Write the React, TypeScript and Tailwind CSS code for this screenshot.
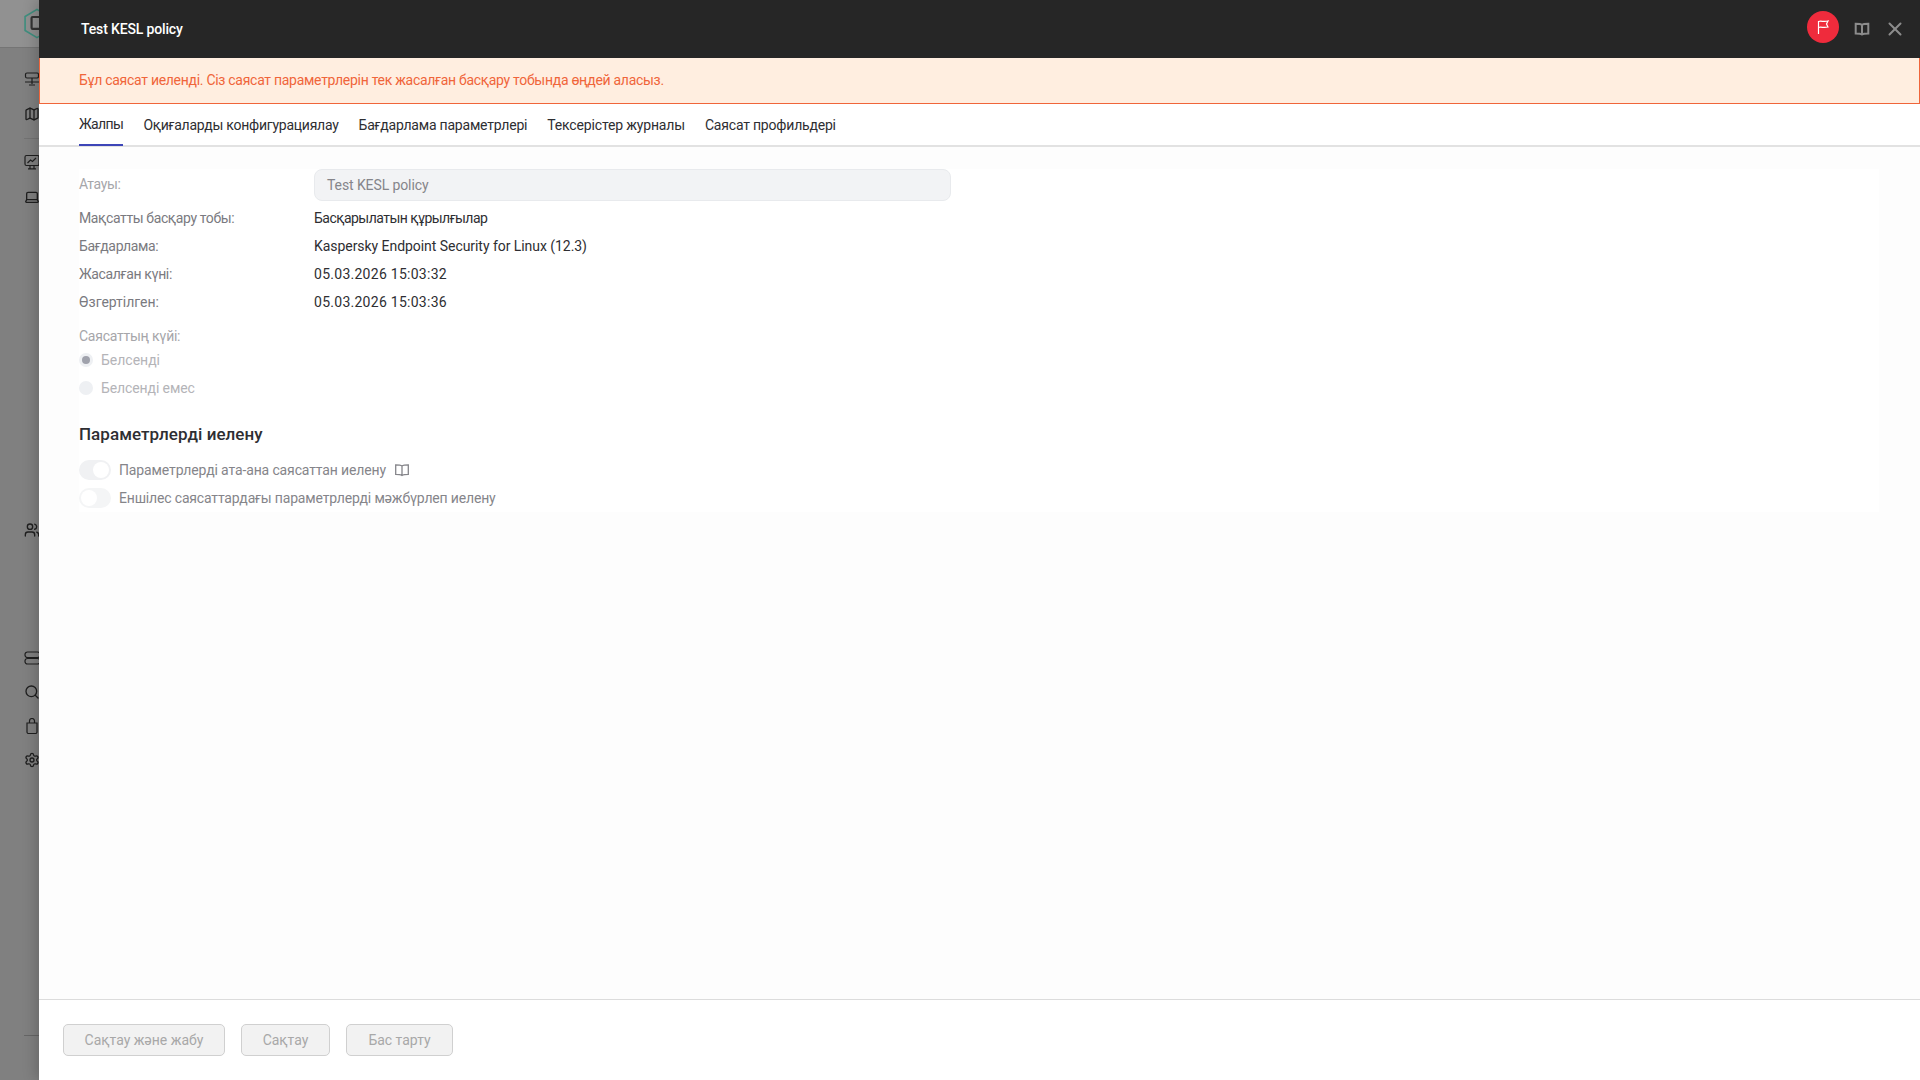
import React from 'react';
import { Laptop, Map, Search, Settings, Users, X } from 'lucide-react';

const BookIcon: React.FC<{ className?: string; width?: number }> = ({ className, width = 1.3 }) => (
  <svg viewBox="0 0 16 16" fill="none" stroke="currentColor" strokeWidth={width} className={className}>
    <path d="M8 4c-1.2-1-3-1.2-6.300-1.200v9.600c3.300 0 5.100.2 6.300 1.100 1.200-.9 3-1.100 6.300-1.100V2.800C11 2.800 9.200 3 8 4zM8 4v9.500" />
  </svg>
);

const FlagIcon = () => (
  <svg viewBox="0 0 16 16" fill="none" stroke="white" strokeWidth="1.2" className="w-4 h-4">
    <path d="M3.500 15V2.500c3-1 5 .8 9.500-.5l-1.500 3 1.500 3c-4.500 1.300-6.500-.5-9.500.5" />
  </svg>
);

const NetIcon = () => (
  <svg viewBox="0 0 16 16" fill="none" stroke="currentColor" strokeWidth="1.2" className="w-4 h-4 shrink-0">
    <rect x="1.500" y="2" width="13" height="5" rx="1.500" />
    <path d="M8 7v6M1 11h14M5 14h6" />
  </svg>
);

const MonitorIcon = () => (
  <svg viewBox="0 0 16 16" fill="none" stroke="currentColor" strokeWidth="1.2" className="w-4 h-4 shrink-0 mt-[15px]">
    <rect x="1" y="1.500" width="14" height="10" rx="1.500" />
    <path d="M3.500 9l3-3 2 1.500L12 4M6 11.500V15M10 11.500V15M4 14.800h8" />
  </svg>
);

const StackIcon = () => (
  <svg viewBox="0 0 16 16" fill="none" stroke="currentColor" strokeWidth="1.2" className="w-4 h-4 shrink-0 mt-[112px]">
    <rect x="1" y="2" width="15" height="5.500" rx="2.500" />
    <rect x="1" y="8.500" width="15" height="5.500" rx="2.500" />
  </svg>
);

const BagIcon = () => (
  <svg viewBox="0 0 16 16" fill="none" stroke="currentColor" strokeWidth="1.2" className="w-4 h-4 shrink-0 mt-[18px]">
    <path d="M3 5h10v9a1.500 1.500 0 0 1-1.500 1.500h-7A1.500 1.500 0 0 1 3 14zM5.500 5V3a2.500 2.500 0 0 1 5 0v2" />
  </svg>
);

const Row: React.FC<{ label: string; value: string; labelClass: string; valueClass: string }> = ({ label, value, labelClass, valueClass }) => (
  <div className="flex h-7 items-center">
    <div className={`w-[235px] shrink-0 text-[#7a7a80] ${labelClass}`}>{label}</div>
    <div className={`text-[#2e2e32] ${valueClass}`}>{value}</div>
  </div>
);

const Toggle: React.FC<{ on?: boolean; label: string; book?: boolean; textClass: string }> = ({ on, label, book, textClass }) => (
  <div className="flex h-7 items-center">
    <div className={`flex h-5 w-8 items-center rounded-full px-0.5 ${on ? 'justify-end bg-[#f0f1f3]' : 'justify-start bg-[#f4f5f6]'}`}>
      <div className="h-4 w-4 rounded-full bg-white" />
    </div>
    <span className={`ml-2 text-[#85858a] ${textClass}`}>{label}</span>
    {book && <BookIcon className="ml-2 w-4 h-4 text-[#85858a]" />}
  </div>
);

const FooterButton: React.FC<{ label: string; width: string }> = ({ label, width }) => (
  <button disabled className={`h-8 ${width} rounded-[5px] border border-[#d0d0d0] bg-[#f2f2f2] text-[#a8a8a8]`}>
    {label}
  </button>
);

const tabs = [
  { name: 'Оқиғаларды конфигурациялау', cls: 'tracking-[-0.25px]' },
  { name: 'Бағдарлама параметрлері', cls: 'tracking-[-0.21px]' },
  { name: 'Тексерістер журналы', cls: 'tracking-[-0.16px]' },
  { name: 'Саясат профильдері', cls: 'tracking-[-0.2px]' },
];

export default function App() {
  return (
    <div className="flex h-screen w-screen overflow-hidden bg-white text-[14px] font-['Roboto',sans-serif]">
      <aside className="flex w-[39px] shrink-0 flex-col overflow-hidden bg-[#808080] text-[#1f1f1f]">
        <div className="flex h-[48px] shrink-0 items-center border-b border-[#757575] bg-[#919191] pl-[24px]">
          <svg viewBox="0 0 24 28" fill="none" className="h-[31px] w-[26px] shrink-0">
            <path d="M12 1l11 6.500v13L12 27 1 20.500v-13z" stroke="#3f8f7f" strokeWidth="1.500" />
            <rect x="7" y="8" width="11" height="11" rx="1" stroke="#333" strokeWidth="2" />
          </svg>
        </div>
        <div className="flex flex-col pl-[24px] pt-[23px]">
          <NetIcon />
          <Map size={16} className="mt-[19px] shrink-0" />
          <div className="mt-[16px] h-px w-4 shrink-0 bg-[#737373]" />
          <MonitorIcon />
          <Laptop size={16} className="mt-[19px] shrink-0" />
          <Users size={16} className="mt-[317px] shrink-0" />
          <StackIcon />
          <Search size={16} className="mt-[18px] shrink-0" />
          <BagIcon />
          <Settings size={16} className="mt-[18px] shrink-0" />
          <div className="mt-[267px] h-px w-4 shrink-0 bg-[#666666]" />
        </div>
      </aside>

      <main className="relative z-10 flex min-w-0 flex-1 flex-col bg-[#fdfdfd] shadow-[-4px_0_12px_rgba(0,0,0,0.18)]">
        <header className="flex h-[58px] shrink-0 items-center bg-[#262626] pl-[42px] pr-[14px]">
          <h1 className="flex-1 text-[14px] font-medium tracking-[-0.15px] text-white">Test KESL policy</h1>
          <div className="mb-[4px] flex h-8 w-8 items-center justify-center rounded-full bg-[#ef2b3c]">
            <FlagIcon />
          </div>
          <BookIcon width={2} className="ml-[15px] h-4 w-4 text-[#8c8c8c]" />
          <X size={22} strokeWidth={2.200} className="ml-[14px] text-[#8c8c8c]" />
        </header>

        <div className="flex h-[46px] shrink-0 items-center border-x border-b border-[#f0653a] bg-[#ffeee0] pl-[39px] tracking-[-0.29px] text-[#f0653a]">
          Бұл саясат иеленді. Сіз саясат параметрлерін тек жасалған басқару тобында өңдей аласыз.
        </div>

        <nav className="flex h-[43px] shrink-0 gap-5 border-b-2 border-[#e2e2e2] bg-white pl-10">
          <div className="flex h-[42px] items-center border-b-2 border-[#3d46b8] tracking-[-0.6px] text-[#2e2e32]">Жалпы</div>
          {tabs.map((tab) => (
            <div key={tab.name} className={`flex h-[42px] items-center text-[#2e2e32] ${tab.cls}`}>{tab.name}</div>
          ))}
        </nav>

        <section className="min-h-0 flex-1 px-10 pt-[22px]">
          <div className="max-w-[1800px] bg-white">
            <div className="flex h-8 items-center">
              <div className="w-[235px] shrink-0 pb-[2px] tracking-[-0.4px] text-[#a6a6aa]">Атауы:</div>
              <div className="flex h-8 w-[637px] items-center rounded-[8px] border border-[#e8eaed] bg-[#f2f3f5] px-3 tracking-[-0.1px] text-[#85858a]">
                Test KESL policy
              </div>
            </div>
            <div className="mt-[3px]">
              <Row label="Мақсатты басқару тобы:" value="Басқарылатын құрылғылар" labelClass="tracking-[-0.38px]" valueClass="tracking-[-0.53px]" />
              <Row label="Бағдарлама:" value="Kaspersky Endpoint Security for Linux (12.3)" labelClass="tracking-[-0.35px]" valueClass="tracking-[-0.05px]" />
              <Row label="Жасалған күні:" value="05.03.2026 15:03:32" labelClass="tracking-[-0.35px]" valueClass="tracking-[0.27px]" />
              <Row label="Өзгертілген:" value="05.03.2026 15:03:36" labelClass="tracking-normal" valueClass="tracking-[0.27px]" />
            </div>
            <div className="mt-[10px] h-5 leading-5 tracking-[-0.25px] text-[#a6a6aa]">Саясаттың күйі:</div>
            <div className="flex h-7 items-center text-[#b4b4b8]">
              <span className="flex h-[14px] w-[14px] items-center justify-center rounded-full bg-[#eef0f3]">
                <span className="h-2 w-2 rounded-full bg-[#a0a2ac]" />
              </span>
              <span className="ml-2">Белсенді</span>
            </div>
            <div className="flex h-7 items-center text-[#b4b4b8]">
              <span className="h-[14px] w-[14px] rounded-full bg-[#eef0f3]" />
              <span className="ml-2 tracking-[-0.1px]">Белсенді емес</span>
            </div>
            <h2 className="mt-[20px] text-[17px] font-medium leading-6 tracking-[0.05px] text-[#2e2e32]">Параметрлерді иелену</h2>
            <div className="mt-[10px]">
              <Toggle on label="Параметрлерді ата-ана саясаттан иелену" book textClass="tracking-[-0.13px]" />
              <Toggle label="Еншілес саясаттардағы параметрлерді мәжбүрлеп иелену" textClass="tracking-[-0.17px]" />
            </div>
          </div>
        </section>

        <footer className="flex h-[81px] shrink-0 items-start gap-4 border-t border-[#dcdcdc] bg-white pl-[24px] pt-6">
          <FooterButton label="Сақтау және жабу" width="w-[162px]" />
          <FooterButton label="Сақтау" width="w-[89px]" />
          <FooterButton label="Бас тарту" width="w-[107px]" />
        </footer>
      </main>
    </div>
  );
}
